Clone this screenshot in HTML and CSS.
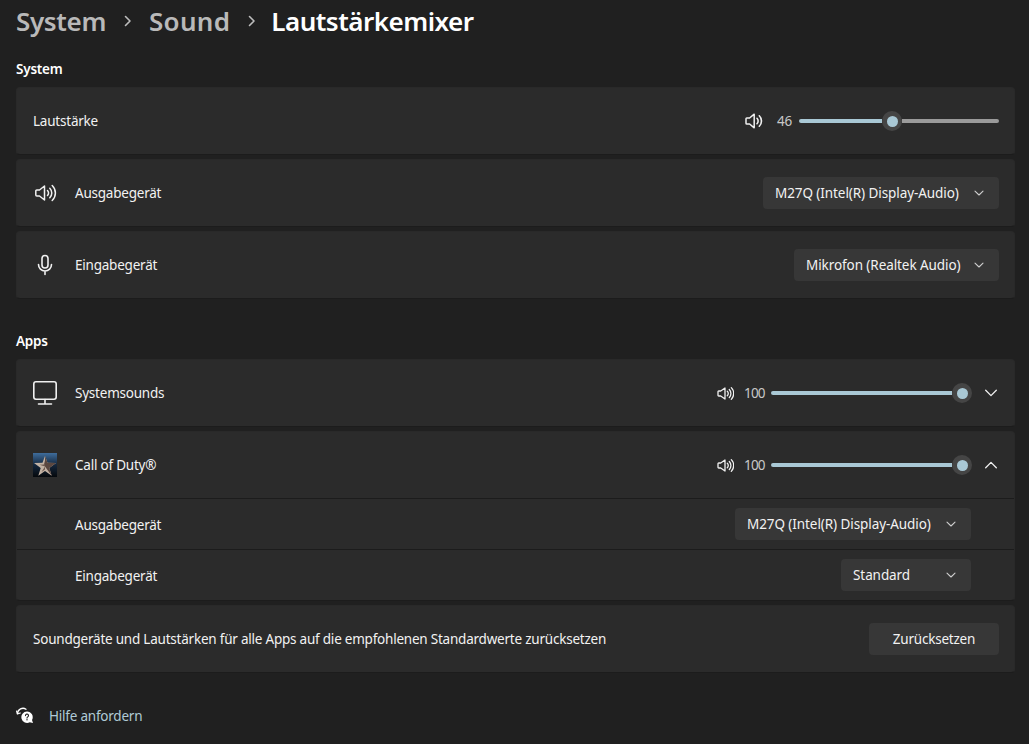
FILE: index.html
```html
<!DOCTYPE html>
<html lang="de">
<head>
<meta charset="utf-8">
<title>Lautstärkemixer</title>
<link rel="stylesheet" href="styles.css">
</head>
<body>
<svg class="defs" width="0" height="0" aria-hidden="true">
  <defs>
    <symbol id="chev-down" viewBox="0 0 12 12"><path d="M2 4.200 6 8l4-3.800" fill="none" stroke="currentColor" stroke-width="1.100" stroke-linecap="round" stroke-linejoin="round"/></symbol>
  </defs>
</svg>
<header class="crumbs">
  <span class="crumb">System</span>
  <svg class="crumb-sep" viewBox="0 0 12 12"><path d="M3.500 1.500 8 6l-4.500 4.500" fill="none" stroke="currentColor" stroke-width="1.600" stroke-linecap="round" stroke-linejoin="round"/></svg>
  <span class="crumb sound">Sound</span>
  <svg class="crumb-sep second" viewBox="0 0 12 12"><path d="M3.500 1.500 8 6l-4.500 4.500" fill="none" stroke="currentColor" stroke-width="1.600" stroke-linecap="round" stroke-linejoin="round"/></svg>
  <span class="crumb current">Lautstärkemixer</span>
</header>

<h2 class="section first">System</h2>
<div class="stack">
  <section class="card row">
    <span class="label">Lautstärke</span>
    <div class="controls">
      <svg class="vol-icon" viewBox="0 0 18 18"><path d="M1.800 6h2.800L9.200 2.200v13.600L4.600 12H1.800a.8.800 0 0 1-.8-.8V6.800a.8.800 0 0 1 .8-.8Z" fill="none" stroke="currentColor" stroke-width="1.500" stroke-linejoin="round"/><path d="M12 6.300a3.800 3.800 0 0 1 0 5.400M14.300 3.800a7.300 7.300 0 0 1 0 10.400" fill="none" stroke="currentColor" stroke-width="1.600" stroke-linecap="round"/></svg>
      <span class="value value-sys">46</span>
      <div class="slider">
        <span class="fill fill-46"></span>
        <span class="thumb"><span class="dot"></span></span>
        <span class="rest"></span>
      </div>
    </div>
  </section>
  <section class="card row">
    <svg class="row-icon" viewBox="0 0 24 24"><path d="M3.800 9h2.700l5-4v14l-5-4H3.800a1 1 0 0 1-1-1V10a1 1 0 0 1 1-1Z" fill="none" stroke="currentColor" stroke-width="1.500" stroke-linejoin="round"/><path d="M14.500 9.500a3.500 3.500 0 0 1 0 5M16.800 7.200a6.800 6.800 0 0 1 0 9.600M19.200 4.500a10.400 10.400 0 0 1 0 15" fill="none" stroke="currentColor" stroke-width="1.500" stroke-linecap="round"/></svg>
    <span class="label">Ausgabegerät</span>
    <div class="controls">
      <div class="select wide"><span>M27Q (Intel(R) Display-Audio)</span><svg class="chev" viewBox="0 0 12 12"><use href="#chev-down"/></svg></div>
    </div>
  </section>
  <section class="card row">
    <svg class="row-icon" viewBox="0 0 24 24"><rect x="9" y="2.500" width="6" height="12.500" rx="3" fill="none" stroke="currentColor" stroke-width="1.600"/><path d="M5.500 11.500a6.500 6.500 0 0 0 13 0M12 18v3.500" fill="none" stroke="currentColor" stroke-width="1.600" stroke-linecap="round"/></svg>
    <span class="label">Eingabegerät</span>
    <div class="controls">
      <div class="select mic"><span>Mikrofon (Realtek Audio)</span><svg class="chev" viewBox="0 0 12 12"><use href="#chev-down"/></svg></div>
    </div>
  </section>
</div>

<h2 class="section">Apps</h2>
<div class="stack">
  <section class="card row">
    <svg class="row-icon" viewBox="0 0 24 24"><rect x="0.800" y="0.800" width="22.400" height="17.400" rx="2.200" fill="none" stroke="currentColor" stroke-width="1.600"/><path d="M12 18.500v4M5.500 23h13" fill="none" stroke="currentColor" stroke-width="1.600" stroke-linecap="round"/></svg>
    <span class="label">Systemsounds</span>
    <div class="controls">
      <svg class="vol-icon small" viewBox="0 0 17 17"><path d="M1.700 6h2L8 3v11l-4.300-3h-2a.7.700 0 0 1-.7-.7V6.700a.7.700 0 0 1 .7-.7Z" fill="none" stroke="currentColor" stroke-width="1.300" stroke-linejoin="round"/><path d="M10.300 6.300a3 3 0 0 1 0 4.400M12.300 4.500a5.800 5.800 0 0 1 0 8M14.300 2.600a8.500 8.500 0 0 1 0 11.800" fill="none" stroke="currentColor" stroke-width="1.300" stroke-linecap="round"/></svg>
      <span class="value value-app">100</span>
      <div class="slider app">
        <span class="fill fill-100"></span>
        <span class="thumb"><span class="dot"></span></span>
      </div>
      <svg class="expander" viewBox="0 0 12 12"><path d="M.7 3.300 6 8.600l5.300-5.300" fill="none" stroke="currentColor" stroke-width="1.300" stroke-linecap="round" stroke-linejoin="round"/></svg>
    </div>
  </section>
  <section class="card group">
    <div class="row">
      <svg class="row-icon" viewBox="0 0 24 24">
        <defs><linearGradient id="cod-bg" x1="0" y1="0" x2="0" y2="1"><stop offset="0" stop-color="#3f6d9c"/><stop offset="0.500" stop-color="#14263c"/><stop offset="1" stop-color="#05080c"/></linearGradient></defs>
        <rect width="24" height="24" fill="url(#cod-bg)"/>
        <path d="M12 3 14.500 9.800 23 10 16.300 14.900 18.700 22.700 12 18 5.300 22.700 7.700 14.900 1 10 9.500 9.800Z" fill="#c2b2a4"/>
        <path d="M12 3 12 13.500 18.700 22.700 16.300 14.900 23 10 14.500 9.800Z" fill="#5a4740"/>
        <path d="M12 7.500 10.800 11.500 6.500 11.800 12 13.500 8.500 19 12 16.500Z" fill="#6f5a50"/>
      </svg>
      <span class="label">Call of Duty®</span>
      <div class="controls">
        <svg class="vol-icon small" viewBox="0 0 17 17"><path d="M1.700 6h2L8 3v11l-4.300-3h-2a.7.700 0 0 1-.7-.7V6.700a.7.700 0 0 1 .7-.7Z" fill="none" stroke="currentColor" stroke-width="1.300" stroke-linejoin="round"/><path d="M10.300 6.300a3 3 0 0 1 0 4.400M12.300 4.500a5.800 5.800 0 0 1 0 8M14.300 2.600a8.500 8.500 0 0 1 0 11.800" fill="none" stroke="currentColor" stroke-width="1.300" stroke-linecap="round"/></svg>
        <span class="value value-app">100</span>
        <div class="slider app">
          <span class="fill fill-100"></span>
          <span class="thumb"><span class="dot"></span></span>
        </div>
        <svg class="expander" viewBox="0 0 12 12"><path d="M.7 8.700 6 3.400l5.300 5.300" fill="none" stroke="currentColor" stroke-width="1.300" stroke-linecap="round" stroke-linejoin="round"/></svg>
      </div>
    </div>
    <div class="subrow">
      <span class="label">Ausgabegerät</span>
      <div class="select wide"><span>M27Q (Intel(R) Display-Audio)</span><svg class="chev" viewBox="0 0 12 12"><use href="#chev-down"/></svg></div>
    </div>
    <div class="subrow">
      <span class="label">Eingabegerät</span>
      <div class="select std"><span>Standard</span><svg class="chev" viewBox="0 0 12 12"><use href="#chev-down"/></svg></div>
    </div>
  </section>
  <section class="card row">
    <span class="label">Soundgeräte und Lautstärken für alle Apps auf die empfohlenen Standardwerte zurücksetzen</span>
    <div class="controls"><button class="btn">Zurücksetzen</button></div>
  </section>
</div>

<footer class="help">
  <svg class="help-icon" viewBox="0 0 18 18"><path d="M1.500 6.500A5.500 5.500 0 0 1 10 2.200" fill="none" stroke="#fff" stroke-width="1.300" stroke-linecap="round"/><path d="M.6 4 1.400 7l2.900-1" fill="none" stroke="#fff" stroke-width="1.200" stroke-linecap="round" stroke-linejoin="round"/><path d="M11 4.500a5.700 5.700 0 0 1 5 8.500l1 3-3.200-.8A5.700 5.700 0 1 1 11 4.500Z" fill="#fff"/><path d="M9.500 8.600a1.500 1.500 0 1 1 2.300 1.300c-.6.400-.8.600-.8 1.200" fill="none" stroke="#202020" stroke-width="1.100" stroke-linecap="round"/><circle cx="11" cy="12.800" r=".7" fill="#202020"/></svg>
  <span class="help-link">Hilfe anfordern</span>
</footer>
</body>
</html>
```
FILE: styles.css
```css
* { box-sizing: border-box; }
html, body { height: 100%; }
body {
  margin: 0;
  padding: 0 14px 0 16px;
  background: #202020;
  color: #fff;
  font-family: "Noto Sans", "Open Sans", sans-serif;
  font-size: 13.5px;
  letter-spacing: -0.22px;
  overflow: hidden;
}
.defs { position: absolute; }
.crumbs {
  height: 44px;
  display: flex;
  align-items: center;
  font-size: 26px;
  font-weight: 600;
  letter-spacing: -0.35px;
  padding-bottom: 2px;
}
.crumb { color: #b9b9b9; }
.crumb.sound { letter-spacing: 0.3px; }
.crumb.current { color: #fff; letter-spacing: -0.5px; }
.crumb-sep { width: 12px; height: 12px; margin: 0 15px 0 16px; color: #bdbdbd; }
.crumb-sep.second { margin: 0 13px 0 16px; }
.section {
  margin: 32px 0 8px;
  font-size: 13.5px;
  line-height: 20px;
  font-weight: 600;
}
.section.first { margin-top: 15px; }
.stack { display: flex; flex-direction: column; gap: 4px; }
.card {
  background: #2b2b2b;
  border-radius: 4px;
  border: 1px solid #292929;
  border-bottom-color: #1c1c1c;
}
.row {
  height: 68px;
  display: flex;
  align-items: center;
  padding: 0 15px 0 16px;
}
.group { padding: 0; }
.group > .row { height: 66px; }
.subrow {
  height: 51px;
  display: flex;
  align-items: center;
  justify-content: space-between;
  padding: 0 43px 0 58px;
  border-top: 1px solid #1c1c1c;
}
.subrow .label { padding-top: 2px; }
.label { color: #f2f2f2; }
.row-icon { width: 24px; height: 24px; margin-right: 18px; color: #f0f0f0; flex: none; }
.controls { margin-left: auto; display: flex; align-items: center; }
.vol-icon { width: 18px; height: 18px; color: #f0f0f0; margin-right: 14px; }
.vol-icon.small { width: 17px; height: 17px; margin-right: 10px; }
.value { color: #c8c8c8; }
.value-sys { width: 22px; }
.value-app { width: 27px; letter-spacing: -0.8px; }
.slider { display: flex; align-items: center; height: 20px; }
.fill { height: 4px; background: #a9c8d5; border-radius: 2px 0 0 2px; }
.fill-46 { width: 83px; }
.fill-100 { width: 181px; }
.rest { width: 97px; height: 4px; background: #9a9a9a; border-radius: 0 2px 2px 0; }
.thumb {
  width: 20px;
  height: 20px;
  border-radius: 50%;
  background: #454545;
  display: flex;
  align-items: center;
  justify-content: center;
}
.dot { width: 11px; height: 11px; border-radius: 50%; background: #a9c8d5; }
.expander { width: 12px; height: 12px; margin-left: 13px; margin-right: 2px; color: #f0f0f0; }
.select {
  height: 32px;
  display: flex;
  align-items: center;
  justify-content: space-between;
  padding: 0 14px 0 12px;
  background: #373737;
  border-radius: 4px;
  color: #f2f2f2;
  letter-spacing: -0.08px;
}
.select.wide { width: 236px; }
.select.mic { width: 205px; }
.select.std { width: 130px; }
.chev { width: 12px; height: 12px; color: #cfcfcf; flex: none; }
.btn {
  width: 130px;
  height: 32px;
  border: 0;
  border-radius: 4px;
  background: #373737;
  color: #f2f2f2;
  font: inherit;
  letter-spacing: inherit;
}
.help { margin-top: 33px; display: flex; align-items: center; height: 20px; }
.help-icon { width: 18px; height: 18px; margin-right: 15px; }
.help-link { color: #b0cbd6; }
```
